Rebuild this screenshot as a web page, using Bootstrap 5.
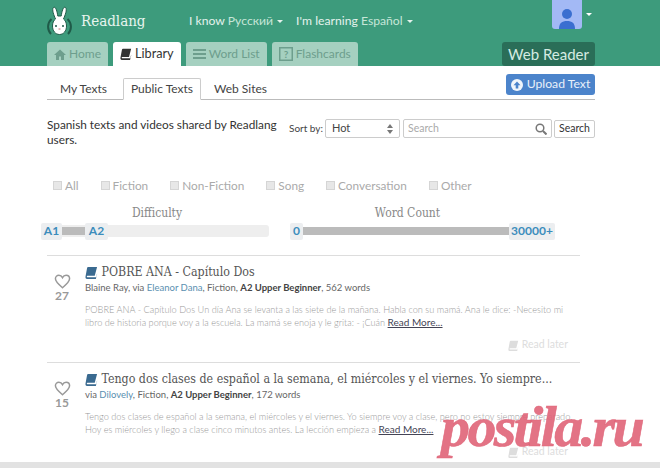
<!DOCTYPE html>
<html lang="en">
<head>
    <meta charset="UTF-8">
    <meta name="viewport" content="width=device-width, initial-scale=1.0">
    <title>Readlang</title>
    <link href="https://cdn.jsdelivr.net/npm/bootstrap@5.3.0/dist/css/bootstrap.min.css" rel="stylesheet">
    <script src="https://cdn.jsdelivr.net/npm/bootstrap@5.3.0/dist/js/bootstrap.bundle.min.js"></script>
    <style>
        html, body { height: 468px; overflow: hidden; }
        body { font-family: Lato, "Liberation Sans", sans-serif; font-size: 13px; color: #333; background: #fff; position: relative; }

        /* header */
        .rl-header { background: #3d9b7c; height: 66px; padding: 0 68px 0 47px; }
        .rl-top { height: 42px; }
        .rl-brand { font-family: "DejaVu Serif Condensed", "DejaVu Serif", serif; font-size: 15px; color: #e8f5ef; margin-left: 9px; margin-right: 39px; width: 69px; white-space: nowrap; }
        .rl-lang { color: #e4f2ec; font-size: 12.2px; margin-right: 13px; white-space: nowrap; }
        .rl-lang b { font-weight: 400; color: #c6e6d8; }
        .rl-caret { display: inline-block; border-top: 3px solid currentColor; border-left: 3px solid transparent; border-right: 3px solid transparent; vertical-align: middle; margin-left: 4px; }
        .rl-avatar { width: 30px; height: 29px; background: #a3b9f5; border-radius: 0 0 3px 3px; }
        .rl-tabs { height: 24px; margin-right: -3px; }
        .rl-tab { height: 24px; padding: 0 7px; margin-right: 5px; background: #a5d0c0; color: #6d9e8d; border-radius: 3px 3px 0 0; font-size: 12px; white-space: nowrap; }
        .rl-tab.rl-on { background: #fff; color: #333; font-size: 12.7px; }
        .rl-tab svg { margin-right: 3px; }
        .rl-webreader { background: #2a6e58; color: #d5ebe2; font-size: 15px; height: 24px; padding: 0 6px; border-radius: 3px; margin-top: -2px; white-space: nowrap; }

        /* sub tabs */
        .rl-main { width: 548px; margin-left: 47px; }
        .rl-subbar { height: 34px; border-bottom: 1px solid #bbb; }
        .rl-sub { height: 22px; color: #444; font-size: 12px; margin-bottom: -1px; border: 1px solid transparent; border-radius: 2px 2px 0 0; margin-left: 12px; }
        .rl-sub.rl-on { border-color: #ccc #ccc #fff; background: #fff; width: 78px; margin-left: 15px; }
        .rl-upload { background: #4c84cb; color: #e9f1fa; font-size: 12.2px; width: 89px; height: 21px; border-radius: 3px; margin-bottom: 4px; white-space: nowrap; }

        /* search row */
        .rl-searchrow { height: 36px; margin-top: 19px; }
        .rl-intro { width: 236px; font-size: 11.8px; line-height: 15px; color: #333; margin-top: -2px; }
        .rl-sortby { font-size: 10px; width: 36px; color: #444; white-space: nowrap; }
        .rl-select { width: 75px; height: 19px; border: 1px solid #ccc; border-radius: 2px; padding: 0 6px; font-size: 11px; color: #444; margin-right: 3px; }
        .rl-search { width: 149px; height: 19px; border: 1px solid #ccc; border-radius: 2px; padding: 0 4px; font-size: 10.5px; color: #aaa; margin-right: 2px; }
        .rl-btn { width: 41px; height: 18px; border: 1px solid #ccc; border-radius: 2px; font-size: 10.5px; color: #333; }

        /* filters */
        .rl-filters { margin: 22px 0 0 6px; height: 18px; color: #aaa; font-size: 11.8px; }
        .rl-check { margin-right: 22px; white-space: nowrap; }
        .rl-box { display: inline-block; width: 9px; height: 9px; background: #e7e7e7; border: 1px solid #d5d5d5; margin-right: 3px; }

        /* sliders */
        .rl-sliders { margin-left: -6px; margin-top: 10px; height: 42px; }
        .rl-slide { position: relative; }
        .rl-slidetitle { font-family: "DejaVu Serif Condensed", "DejaVu Serif", serif; font-size: 12px; color: #888; text-align: center; height: 20px; line-height: 16px; }
        .rl-track { height: 12px; background: #eee; border-radius: 3px; position: relative; }
        .rl-fill { position: absolute; top: 2px; height: 8px; background: #bbb; }
        .rl-handle { position: absolute; top: -2px; height: 17px; background: #eceef0; color: #3c8dbc; font-weight: 700; font-size: 12px; line-height: 16px; text-align: center; border-radius: 2px; }

        /* text list */
        .rl-list { width: 533px; margin-top: 8px; }
        .rl-item { border-top: 1px solid #ddd; height: 107px; padding-top: 8px; }
        .rl-like { width: 30px; margin-right: 8px; text-align: center; color: #999; font-weight: 700; font-size: 12px; line-height: 14px; padding-top: 10px; }
        .rl-title { font-family: "DejaVu Serif Condensed", "DejaVu Serif", serif; font-size: 12.3px; color: #555; line-height: 17px; white-space: nowrap; }
        .rl-meta { font-size: 9.5px; color: #666; line-height: 14px; white-space: nowrap; }
        .rl-meta a { color: #5a8fb0; text-decoration: none; }
        .rl-meta b { color: #444; }
        .rl-body { font-size: 9.2px; color: #999; line-height: 13px; margin-top: 8px; width: 490px; font-weight: 300; }
        .rl-body a { color: #445; font-size: 10px; font-weight: 400; }
        .rl-later { color: #ddd; font-size: 10.5px; margin-top: 8px; padding-right: 12px; }
        .rl-foot { position: absolute; left: 0; right: 0; bottom: 0; height: 6px; background: #e2e2e2; }
        .rl-stamp { position: absolute; left: 441px; top: 392px; font-family: "Liberation Serif", serif; font-weight: 700; font-style: italic; font-size: 58px; letter-spacing: -2.6px; line-height: 70px; color: rgba(224, 100, 120, .9); -webkit-text-stroke: .6px rgba(224, 100, 120, .9); white-space: nowrap; }
    </style>
</head>

<body>
    <svg width="0" height="0" class="position-absolute">
        <symbol id="rl-book" viewBox="0 0 14 14"><path d="M3.500 1h9.500l-2.500 9.500H2.600c-.8 0-.9 1.500 0 1.500h9.400l1-4v1l-1.300 5H2.200C.8 14 .2 12.600 .6 11L2.200 2.300C2.400 1.500 2.800 1 3.500 1z" fill="currentColor"/></symbol>
        <symbol id="rl-heart" viewBox="0 0 20 18"><path d="M10 16.500C4 11.500 1.500 9 1.500 5.800 1.500 3.300 3.400 1.500 5.700 1.500c1.800 0 3.400 1 4.300 2.800.9-1.800 2.500-2.800 4.300-2.800 2.300 0 4.200 1.800 4.200 4.300 0 3.200-2.500 5.700-8.500 10.700z" fill="none" stroke="currentColor" stroke-width="1.800"/></symbol>
    </svg>

    <!-- Header -->
    <div class="rl-header">
        <div class="rl-top d-flex align-items-center">
            <svg width="25" height="33" viewBox="0 0 25 33" class="flex-shrink-0">
                <path d="M4.500 14A10.500 10.500 0 0 0 4 29M20.500 14A10.500 10.500 0 0 1 21 29" fill="none" stroke="#1f5a48" stroke-width="2"/>
                <path d="M6.500 2.500c2-1.500 3.500 3 4.300 8.500h3.400C15 5.500 16.500 1 18.500 2.500c2 2-.5 8-2 11.500 2 1.500 3 4 3 7 0 5-3 8.500-7 8.500s-7-3.500-7-8.500c0-3 1-5.500 3-7C7 10.500 4.500 4.500 6.500 2.500z" fill="#fff" stroke="#1f5a48"/>
                <circle cx="9" cy="21" r="1" fill="#1f5a48"/><circle cx="16" cy="21" r="1" fill="#1f5a48"/>
                <path d="M11.500 24h2" stroke="#c77"/>
            </svg>
            <div class="rl-brand">Readlang</div>
            <div class="rl-lang">I know <b>Русский</b><span class="rl-caret"></span></div>
            <div class="rl-lang">I'm learning <b>Español</b><span class="rl-caret"></span></div>
            <div class="ms-auto d-flex align-items-center align-self-start text-white">
                <div class="rl-avatar d-flex align-items-end justify-content-center">
                    <svg width="20" height="24" viewBox="0 0 20 24"><circle cx="10" cy="9" r="5" fill="#3a6ed0"/><path d="M2 24c0-6 3-8 8-8s8 2 8 8z" fill="#3a6ed0"/></svg>
                </div>
                <span class="rl-caret"></span>
            </div>
        </div>
        <div class="rl-tabs d-flex align-items-end">
            <div class="rl-tab d-flex align-items-center">
                <svg width="12" height="11" viewBox="0 0 12 11"><path d="M6 .500 0 6h2v5h3V7.500h2V11h3V6h2z" fill="currentColor"/></svg>Home
            </div>
            <div class="rl-tab rl-on d-flex align-items-center">
                <svg width="12" height="12"><use href="#rl-book"/></svg>Library
            </div>
            <div class="rl-tab d-flex align-items-center">
                <svg width="13" height="10" viewBox="0 0 13 10"><path d="M0 0h13v2H0zM0 4h13v2H0zM0 8h13v2H0z" fill="currentColor"/></svg>Word List
            </div>
            <div class="rl-tab d-flex align-items-center">
                <svg width="14" height="14" viewBox="0 0 14 14"><rect x=".75" y=".75" width="12.500" height="12.500" fill="none" stroke="currentColor" stroke-width="1.500"/><text x="7" y="11" font-size="10" font-weight="700" text-anchor="middle" fill="currentColor">?</text></svg>Flashcards
            </div>
            <div class="rl-webreader ms-auto d-flex align-items-center">Web Reader</div>
        </div>
    </div>

    <div class="rl-main">
        <!-- sub tabs -->
        <div class="rl-subbar d-flex align-items-end">
            <div class="rl-sub d-flex align-items-center">My Texts</div>
            <div class="rl-sub rl-on d-flex align-items-center justify-content-center">Public Texts</div>
            <div class="rl-sub d-flex align-items-center">Web Sites</div>
            <div class="rl-upload ms-auto d-flex align-items-center justify-content-center align-self-end">
                <svg width="12" height="12" viewBox="0 0 12 12" class="me-1"><circle cx="6" cy="6" r="6" fill="#f0f5fb"/><path d="M6 2.500 2.500 6.200h2.200V9.500h2.600V6.200h2.200z" fill="#4c84cb"/></svg>Upload Text
            </div>
        </div>

        <!-- search row -->
        <div class="rl-searchrow d-flex align-items-start">
            <div class="rl-intro flex-shrink-0">Spanish texts and videos shared by Readlang users.</div>
            <div class="d-flex align-items-center ms-auto">
                <div class="rl-sortby">Sort by:</div>
                <div class="rl-select d-flex align-items-center justify-content-between">Hot
                    <svg width="6" height="10" viewBox="0 0 6 10"><path d="M3 0 6 4H0zM3 10 0 6h6z" fill="#777"/></svg>
                </div>
                <div class="rl-search d-flex align-items-center justify-content-between">Search
                    <svg width="12" height="12" viewBox="0 0 12 12"><circle cx="5" cy="5" r="3.800" fill="none" stroke="#777" stroke-width="1.500"/><path d="M8 8l3.500 3.500" stroke="#777" stroke-width="2"/></svg>
                </div>
                <div class="rl-btn d-flex align-items-center justify-content-center">Search</div>
            </div>
        </div>

        <!-- filters -->
        <div class="rl-filters d-flex align-items-center">
            <div class="rl-check"><span class="rl-box"></span>All</div>
            <div class="rl-check"><span class="rl-box"></span>Fiction</div>
            <div class="rl-check"><span class="rl-box"></span>Non-Fiction</div>
            <div class="rl-check"><span class="rl-box"></span>Song</div>
            <div class="rl-check"><span class="rl-box"></span>Conversation</div>
            <div class="rl-check"><span class="rl-box"></span>Other</div>
        </div>

        <!-- sliders -->
        <div class="rl-sliders d-flex">
            <div class="rl-slide" style="width:228px">
                <div class="rl-slidetitle ps-1">Difficulty</div>
                <div class="rl-track">
                    <div class="rl-fill" style="left:20px;width:25px"></div>
                    <div class="rl-handle" style="left:0;width:21px">A1</div>
                    <div class="rl-handle" style="left:44px;width:23px">A2</div>
                </div>
            </div>
            <div class="rl-slide" style="width:265px;margin-left:21px">
                <div class="rl-slidetitle" style="padding-right:30px">Word Count</div>
                <div class="rl-track bg-transparent">
                    <div class="rl-fill" style="left:13px;width:206px"></div>
                    <div class="rl-handle" style="left:0;width:13px">0</div>
                    <div class="rl-handle" style="left:219px;width:46px">30000+</div>
                </div>
            </div>
        </div>

        <!-- list -->
        <div class="rl-list" id="text-list"></div>
    </div>

    <div class="rl-foot"></div>
    <div class="rl-stamp">postila.ru</div>

    <script>
        const texts = [
            {
                title: "POBRE ANA - Capítulo Dos", by: "Blaine Ray, via ", user: "Eleanor Dana", words: "562", likes: 27,
                body: "POBRE ANA - Capítulo Dos Un día Ana se levanta a las siete de la mañana. Habla con su mamá. Ana le dice: -Necesito mi libro de historia porque voy a la escuela. La mamá se enoja y le grita: - ¡Cuán "
            },
            {
                title: "Tengo dos clases de español a la semana, el miércoles y el viernes. Yo siempre...", by: "via ", user: "Dilovely", words: "172", likes: 15,
                body: "Tengo dos clases de español a la semana, el miércoles y el viernes. Yo siempre voy a clase, pero no estoy siempre preparado. Hoy es miércoles y llego a clase cinco minutos antes. La lección empieza a "
            }
        ];

        document.getElementById("text-list").innerHTML = texts.map(t => `
            <div class="rl-item d-flex">
                <div class="rl-like flex-shrink-0">
                    <svg width="17" height="15" class="d-block mx-auto"><use href="#rl-heart"/></svg>
                    ${t.likes}
                </div>
                <div class="flex-grow-1">
                    <div class="rl-title"><svg width="13" height="13" style="color:#3a6a90"><use href="#rl-book"/></svg> ${t.title}</div>
                    <div class="rl-meta">${t.by}<a href="#">${t.user}</a>, Fiction, <b>A2 Upper Beginner</b>, ${t.words} words</div>
                    <div class="rl-body">${t.body}<a href="#">Read More...</a></div>
                    <div class="rl-later text-end"><svg width="11" height="11"><use href="#rl-book"/></svg> Read later</div>
                </div>
            </div>`).join("");
    </script>
</body>
</html>
